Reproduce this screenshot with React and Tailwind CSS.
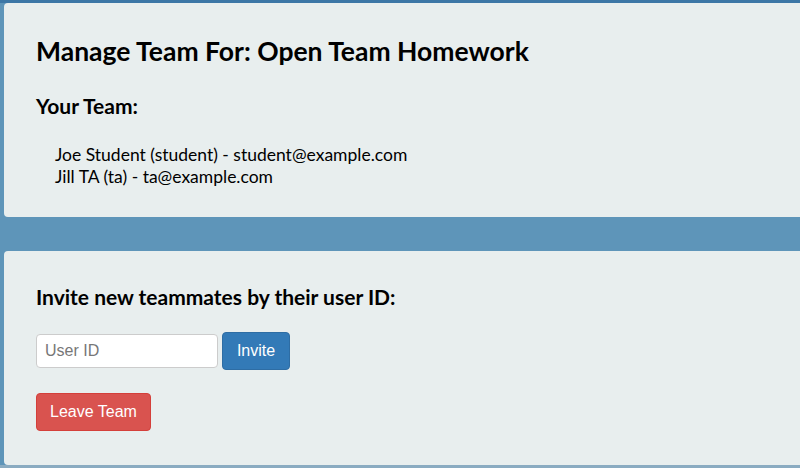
import React from 'react';

const members = [
  'Joe Student (student) - student@example.com',
  'Jill TA (ta) - ta@example.com',
];

export default function App() {
  return (
    <div className="h-[468px] w-[800px] overflow-hidden bg-[#5e95b9] border-t-[3px] border-[#3c77a6] font-['Lato',sans-serif] text-black">
      {/* team card */}
      <div className="ml-[4px] w-[820px] h-[214px] rounded-[4px] bg-[#e8eeee] pl-[32px] pt-[31px]">
        <h1 className="text-[26.5px] font-bold leading-[34px]">Manage Team For: Open Team Homework</h1>
        <h2 className="mt-[26px] text-[21px] font-bold leading-[24px]">Your Team:</h2>
        <ul className="mt-[26px] pl-[19px] text-[17.5px] leading-[22px]">
          {members.map((m, i) => (
            <li key={i}>{m}</li>
          ))}
        </ul>
      </div>

      {/* invite card */}
      <div className="mt-[34px] ml-[4px] w-[820px] h-[214px] rounded-[4px] bg-[#e8eeee] pl-[32px] pt-[34px]">
        <h2 className="text-[21px] font-bold leading-[24px]">Invite new teammates by their user ID:</h2>
        <div className="mt-[23px] flex items-center gap-[4px] font-['Liberation_Sans',sans-serif]">
          <input
            placeholder="User ID"
            className="h-[34px] w-[182px] rounded-[4px] border border-[#cccccc] bg-white px-[8px] text-[16px] text-[#555] placeholder:text-[#777] outline-none"
          />
          <button className="h-[38px] w-[68px] rounded-[4px] border border-[#2e6da4] bg-[#337ab7] text-[16px] text-white">
            Invite
          </button>
        </div>
        <button className="mt-[23px] h-[38px] w-[115px] rounded-[4px] border border-[#d43f3a] bg-[#d9534f] text-[16px] text-white font-['Liberation_Sans',sans-serif]">
          Leave Team
        </button>
      </div>
      <div className="h-[3px] bg-[#8aabc1]" />
    </div>
  );
}
